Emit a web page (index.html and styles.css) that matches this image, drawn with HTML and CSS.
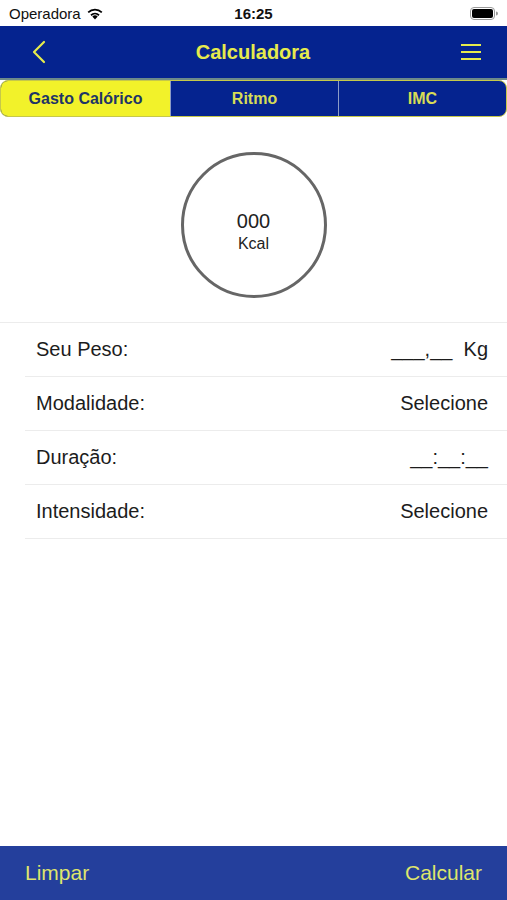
FILE: index.html
```html
<!DOCTYPE html>
<html lang="pt">
<head>
  <meta charset="UTF-8">
  <title>Calculadora</title>
  <link rel="stylesheet" href="styles.css">
</head>
<body>

  <div class="status">
    <div class="carrier">
      Operadora
      <svg class="wifi" width="18" height="13" viewBox="0 0 18 13">
        <path d="M9 12.5 L6.3 9.6 A3.9 3.9 0 0 1 11.7 9.6 Z" fill="#000"/>
        <path d="M4.4 7.6 A6.7 6.7 0 0 1 13.6 7.6 L12.4 8.9 A5 5 0 0 0 5.6 8.9 Z" fill="#000"/>
        <path d="M1.6 4.8 A10.6 10.6 0 0 1 16.4 4.8 L15.2 6.1 A8.9 8.9 0 0 0 2.8 6.1 Z" fill="#000"/>
      </svg>
    </div>
    <div class="clock">16:25</div>
    <div class="battery">
      <svg width="28" height="13" viewBox="0 0 28 13">
        <rect x="0.5" y="0.5" width="24" height="12" rx="3.5" fill="none" stroke="#999"/>
        <rect x="2" y="2" width="21" height="9" rx="2" fill="#000"/>
        <path d="M26 4.5 A2 2 0 0 1 26 8.5 Z" fill="#999"/>
      </svg>
    </div>
  </div>

  <div class="navbar">
    <svg class="back" width="14" height="24" viewBox="0 0 14 24">
      <path d="M12 2 L2 12 L12 22" fill="none" stroke="#e6eb4c" stroke-width="2.2" stroke-linecap="round" stroke-linejoin="round"/>
    </svg>
    <h1>Calculadora</h1>
    <svg class="menu" width="22" height="18" viewBox="0 0 22 18">
      <path d="M1 2 H21 M1 9 H21 M1 16 H21" stroke="#e6eb4c" stroke-width="2"/>
    </svg>
  </div>

  <div class="tabs">
    <div class="tab active">Gasto Calórico</div>
    <div class="tab">Ritmo</div>
    <div class="tab">IMC</div>
  </div>

  <div class="result">
    <div class="ring">
      <span class="value">000</span>
      <span class="unit">Kcal</span>
    </div>
  </div>

  <div class="form">
    <div class="row">
      <span>Seu Peso:</span>
      <span class="field">___,__&nbsp;&nbsp;Kg</span>
    </div>
    <div class="row">
      <span>Modalidade:</span>
      <span class="field">Selecione</span>
    </div>
    <div class="row">
      <span>Duração:</span>
      <span class="field">__:__:__</span>
    </div>
    <div class="row">
      <span>Intensidade:</span>
      <span class="field">Selecione</span>
    </div>
  </div>

  <div class="footer">
    <span>Limpar</span>
    <span>Calcular</span>
  </div>

</body>
</html>
```

FILE: styles.css
```css
body {
  margin: 0;
  width: 507px;
  height: 900px;
  font-family: "Liberation Sans", Arial, sans-serif;
  background: #fff;
  display: flex;
  flex-direction: column;
  color: #222;
}

.status {
  height: 26px;
  display: flex;
  align-items: center;
  justify-content: space-between;
  padding: 0 9px;
  font-size: 15px;
  color: #111;
}

.carrier {
  display: flex;
  align-items: center;
  gap: 5px;
  width: 120px;
}

.clock {
  font-weight: bold;
  font-size: 15px;
}

.battery {
  width: 120px;
  display: flex;
  justify-content: flex-end;
}

.navbar {
  height: 52px;
  background: #05238f;
  display: flex;
  align-items: center;
  justify-content: space-between;
  padding: 0 25px 0 32px;
  border-bottom: 2px solid #6d8a8a;
}

.navbar h1 {
  margin: 0;
  font-size: 20px;
  font-weight: bold;
  color: #e6eb4c;
}

.tabs {
  display: grid;
  grid-template-columns: 169px 168px 1fr;
  height: 35px;
  border: 1px solid #c6c84a;
  border-radius: 8px;
  overflow: hidden;
  background: #05238f;
}

.tab {
  display: flex;
  align-items: center;
  justify-content: center;
  font-size: 16px;
  font-weight: bold;
  color: #d7dc56;
  border-left: 1px solid #8d9cc6;
}

.tab.active {
  background: #f2f22a;
  color: #1e3566;
  border-left: none;
}

.result {
  height: 194px;
  padding-top: 11px;
  display: flex;
  align-items: center;
  justify-content: center;
  border-bottom: 1px solid #ececec;
}

.ring {
  width: 146px;
  height: 146px;
  box-sizing: border-box;
  border: 3px solid #666;
  border-radius: 50%;
  display: flex;
  flex-direction: column;
  align-items: center;
  justify-content: center;
  padding-top: 12px;
}

.ring .value {
  font-size: 20px;
  color: #222;
}

.ring .unit {
  font-size: 16px;
  color: #222;
  margin-top: 2px;
}

.form {
  margin-left: 25px;
}

.row {
  height: 53px;
  display: flex;
  align-items: center;
  justify-content: space-between;
  padding: 0 19px 0 11px;
  font-size: 20px;
  color: #1c1c1c;
  border-bottom: 1px solid #ececec;
}

.footer {
  margin-top: auto;
  height: 54px;
  background: #243f9c;
  display: flex;
  align-items: center;
  justify-content: space-between;
  padding: 0 25px;
  font-size: 21px;
  color: #dfe56c;
}
```
